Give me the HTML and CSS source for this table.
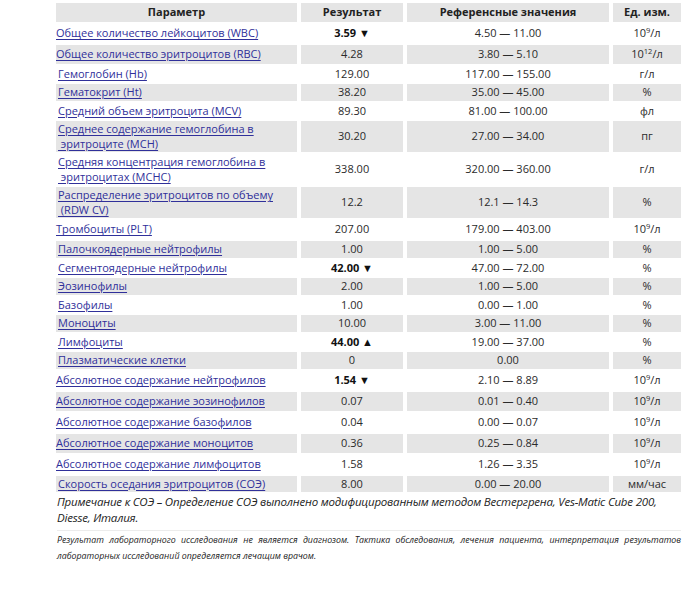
FILE: index.html
```html
<!DOCTYPE html>
<html lang="ru">
<head>
<meta charset="utf-8">
<title>Анализ крови</title>
<link rel="stylesheet" href="styles.css">
</head>
<body>
<div class="page">
<table class="results">
<colgroup><col class="c-param"><col class="c-res"><col class="c-ref"><col class="c-unit"></colgroup>
<thead>
<tr class="g"><th>Параметр</th><th>Результат</th><th>Референсные значения</th><th>Ед. изм.</th></tr>
</thead>
<tbody>
<tr class="s"><td class="p"><a href="#">Общее количество лейкоцитов (WBC)</a></td><td class="r"><b>3.59 ▼</b></td><td class="f">4.50 — 11.00</td><td class="u">10<sup>9</sup>/л</td></tr>
<tr class="g s"><td class="p"><a href="#">Общее количество эритроцитов (RBC)</a></td><td class="r">4.28</td><td class="f">3.80 — 5.10</td><td class="u">10<sup>12</sup>/л</td></tr>
<tr><td class="p"><a href="#">Гемоглобин (Hb)</a></td><td class="r">129.00</td><td class="f">117.00 — 155.00</td><td class="u">г/л</td></tr>
<tr class="g"><td class="p"><a href="#">Гематокрит (Ht)</a></td><td class="r">38.20</td><td class="f">35.00 — 45.00</td><td class="u">%</td></tr>
<tr><td class="p"><a href="#">Средний объем эритроцита (MCV)</a></td><td class="r">89.30</td><td class="f">81.00 — 100.00</td><td class="u">фл</td></tr>
<tr class="g"><td class="p"><a href="#">Среднее содержание гемоглобина в<br>&nbsp;эритроците (MCH)</a></td><td class="r">30.20</td><td class="f">27.00 — 34.00</td><td class="u">пг</td></tr>
<tr><td class="p"><a href="#">Средняя концентрация гемоглобина в<br>&nbsp;эритроцитах (MCHC)</a></td><td class="r">338.00</td><td class="f">320.00 — 360.00</td><td class="u">г/л</td></tr>
<tr class="g"><td class="p"><a href="#">Распределение эритроцитов по объему<br>&nbsp;(RDW CV)</a></td><td class="r">12.2</td><td class="f">12.1 — 14.3</td><td class="u">%</td></tr>
<tr class="s"><td class="p"><a href="#">Тромбоциты (PLT)</a></td><td class="r">207.00</td><td class="f">179.00 — 403.00</td><td class="u">10<sup>9</sup>/л</td></tr>
<tr class="g"><td class="p"><a href="#">Палочкоядерные нейтрофилы</a></td><td class="r">1.00</td><td class="f">1.00 — 5.00</td><td class="u">%</td></tr>
<tr><td class="p"><a href="#">Сегментоядерные нейтрофилы</a></td><td class="r"><b>42.00 ▼</b></td><td class="f">47.00 — 72.00</td><td class="u">%</td></tr>
<tr class="g"><td class="p"><a href="#">Эозинофилы</a></td><td class="r">2.00</td><td class="f">1.00 — 5.00</td><td class="u">%</td></tr>
<tr><td class="p"><a href="#">Базофилы</a></td><td class="r">1.00</td><td class="f">0.00 — 1.00</td><td class="u">%</td></tr>
<tr class="g"><td class="p"><a href="#">Моноциты</a></td><td class="r">10.00</td><td class="f">3.00 — 11.00</td><td class="u">%</td></tr>
<tr><td class="p"><a href="#">Лимфоциты</a></td><td class="r"><b>44.00 ▲</b></td><td class="f">19.00 — 37.00</td><td class="u">%</td></tr>
<tr class="g"><td class="p"><a href="#">Плазматические клетки</a></td><td class="r">0</td><td class="f">0.00</td><td class="u">%</td></tr>
<tr class="s"><td class="p"><a href="#">Абсолютное содержание нейтрофилов</a></td><td class="r"><b>1.54 ▼</b></td><td class="f">2.10 — 8.89</td><td class="u">10<sup>9</sup>/л</td></tr>
<tr class="g s"><td class="p"><a href="#">Абсолютное содержание эозинофилов</a></td><td class="r">0.07</td><td class="f">0.01 — 0.40</td><td class="u">10<sup>9</sup>/л</td></tr>
<tr class="s"><td class="p"><a href="#">Абсолютное содержание базофилов</a></td><td class="r">0.04</td><td class="f">0.00 — 0.07</td><td class="u">10<sup>9</sup>/л</td></tr>
<tr class="g s"><td class="p"><a href="#">Абсолютное содержание моноцитов</a></td><td class="r">0.36</td><td class="f">0.25 — 0.84</td><td class="u">10<sup>9</sup>/л</td></tr>
<tr class="s"><td class="p"><a href="#">Абсолютное содержание лимфоцитов</a></td><td class="r">1.58</td><td class="f">1.26 — 3.35</td><td class="u">10<sup>9</sup>/л</td></tr>
<tr class="g"><td class="p"><a href="#">Скорость оседания эритроцитов (СОЭ)</a></td><td class="r">8.00</td><td class="f">0.00 — 20.00</td><td class="u">мм/час</td></tr>
</tbody>
</table>
<p class="note">Примечание к СОЭ – Определение СОЭ выполнено модифицированным методом Вестергрена, Ves-Matic Cube 200, Diesse, Италия.</p>
<p class="disclaimer">Результат лабораторного исследования не является диагнозом. Тактика обследования, лечения пациента, интерпретация результатов лабораторных исследований определяется лечащим врачом.</p>
</div>
</body>
</html>
```

FILE: styles.css
```css
html, body {
  margin: 0;
  padding: 0;
  background: #ffffff;
}

body {
  font-family: "Open Sans", "Noto Sans", sans-serif;
  color: #2b2b2b;
}

.page {
  padding: 1px 0 0 52px;
  width: 633px;
}

.results {
  border-collapse: separate;
  border-spacing: 4px 2px;
  font-size: 11px;
  line-height: 14.5px;
  table-layout: fixed;
  width: 633px;
}

.c-param { width: 241px; }
.c-res { width: 102px; }
.c-ref { width: 202px; }
.c-unit { width: 68px; }

.results th {
  font-weight: 700;
  text-align: center;
  padding: 2px 0;
  color: #222;
}

.results td {
  padding: 1px 0;
  vertical-align: middle;
}

.results tr.s td {
  padding: 2.25px 0;
}

.results tr.g th,
.results tr.g td {
  background: #e5e5e5;
}

.results td.p {
  padding-left: 2px;
  text-align: left;
}

.results td.p a {
  color: #30309a;
  text-decoration: underline;
  text-underline-offset: 2px;
}

.results td.r,
.results td.f,
.results td.u {
  text-align: center;
}

.results b {
  font-weight: 700;
  color: #111;
}

.results sup {
  font-size: 7.5px;
  line-height: 0;
  vertical-align: 4px;
}

.note {
  margin: 0;
  padding: 0 0 0 5px;
  font-style: italic;
  font-size: 11.5px;
  letter-spacing: -0.2px;
  line-height: 16px;
  color: #222;
  width: 610px;
}

.disclaimer {
  margin: 4px 0 0 5px;
  padding-top: 1px;
  border-top: 1px solid #ececec;
  font-style: italic;
  font-size: 8.8px;
  line-height: 16px;
  text-align: justify;
  color: #222;
  width: 624px;
}
```
